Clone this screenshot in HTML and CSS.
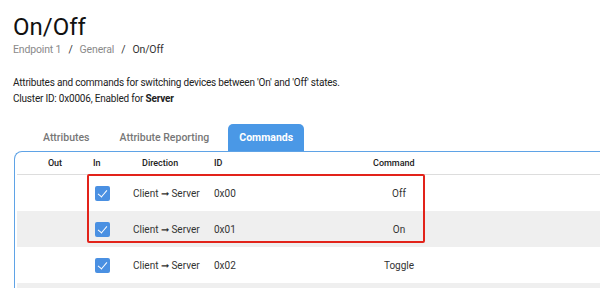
FILE: index.html
```html
<!DOCTYPE html>
<html lang="en">
<head>
  <meta charset="UTF-8">
  <title>On/Off</title>
  <link rel="stylesheet" href="styles.css">
</head>
<body>

  <h1>On/Off</h1>
  <div class="crumbs">
    <span>Endpoint 1</span><span class="sep">/</span><span>General</span><span class="sep">/</span><span class="current">On/Off</span>
  </div>

  <p class="desc">
    Attributes and commands for switching devices between 'On' and 'Off' states.<br>
    Cluster ID: 0x0006, Enabled for <b>Server</b>
  </p>

  <div class="tabs">
    <div class="tab">Attributes</div>
    <div class="tab">Attribute Reporting</div>
    <div class="tab active">Commands</div>
  </div>

  <div class="panel">
    <div class="row head">
      <div class="c-out">Out</div>
      <div class="c-in">In</div>
      <div class="c-dir">Direction</div>
      <div class="c-id">ID</div>
      <div class="c-cmd">Command</div>
    </div>
    <div class="row">
      <div class="c-out"></div>
      <div class="c-in"><span class="check"></span></div>
      <div class="c-dir">Client &#x279E; Server</div>
      <div class="c-id">0x00</div>
      <div class="c-cmd">Off</div>
    </div>
    <div class="row alt">
      <div class="c-out"></div>
      <div class="c-in"><span class="check"></span></div>
      <div class="c-dir">Client &#x279E; Server</div>
      <div class="c-id">0x01</div>
      <div class="c-cmd">On</div>
    </div>
    <div class="row">
      <div class="c-out"></div>
      <div class="c-in"><span class="check"></span></div>
      <div class="c-dir">Client &#x279E; Server</div>
      <div class="c-id">0x02</div>
      <div class="c-cmd">Toggle</div>
    </div>
    <div class="row alt"></div>

    <div class="highlight"></div>
  </div>

</body>
</html>
```

FILE: styles.css
```css
html, body {
  height: 288px;
  overflow: hidden;
}
body {
  margin: 0;
  padding: 0 0 0 13px;
  font-family: Roboto, "Liberation Sans", sans-serif;
  color: #222;
  background: #fff;
}
h1 {
  margin: 0;
  padding-top: 13px;
  font-size: 24px;
  font-weight: 400;
  line-height: 28px;
  color: #111;
}
.crumbs {
  margin-top: 2px;
  font-size: 10.5px;
  line-height: 14px;
  letter-spacing: -0.15px;
  color: #8a8a8a;
}
.crumbs .sep {
  margin: 0 7px;
  color: #333;
}
.crumbs .current {
  color: #333;
}
.desc {
  margin: 18px 0 0;
  font-size: 10px;
  line-height: 16px;
  letter-spacing: -0.2px;
  color: #222;
}
.desc b {
  font-weight: 700;
}
.tabs {
  display: flex;
  margin-top: 17px;
  padding-left: 15px;
  height: 27px;
}
.tab {
  padding: 0 15px;
  font-size: 10.5px;
  font-weight: 500;
  line-height: 27px;
  color: #777;
}
.tab.active {
  margin-left: 4px;
  padding: 0 11px;
  background: #4a98e6;
  color: #fff;
  font-weight: 700;
  border-radius: 5px 5px 0 0;
}
.panel {
  position: relative;
  height: 136px;
  overflow: hidden;
  margin-left: 1px;
  border: 1.5px solid #5fa3e6;
  border-right: none;
  border-bottom: none;
  border-radius: 8px 0 0 0;
  padding-left: 2px;
}
.row {
  display: grid;
  grid-template-columns: 71px 40px 80px 165px 52px 1fr;
  align-items: center;
  height: 36px;
  font-size: 10px;
  color: #333;
}
.row.alt {
  background: #efefef;
}
.row.head {
  height: 22px;
  border-bottom: 1px solid #ddd;
  font-size: 9px;
  font-weight: 500;
  color: #222;
}
.head .c-out { text-align: center; padding-left: 5px; }
.head .c-in { padding-left: 5px; }
.head .c-dir { padding-left: 14px; }
.head .c-id { padding-left: 6px; }
.head .c-cmd { padding-left: 0; text-align: left; }
.c-in { padding-left: 7px; display: flex; }
.c-dir { padding-left: 5px; }
.c-id { padding-left: 6px; }
.c-cmd { text-align: center; }
.check {
  display: inline-block;
  position: relative;
  width: 15px;
  height: 15px;
  background: #4a90e2;
  border-radius: 2px;
}
.check::after {
  content: "";
  position: absolute;
  left: 5px;
  top: 2px;
  width: 4px;
  height: 8px;
  border: solid #fff;
  border-width: 0 1.5px 1.5px 0;
  transform: rotate(40deg);
}
.highlight {
  position: absolute;
  left: 71.5px;
  top: 22px;
  width: 334px;
  height: 65px;
  border: 2px solid #e2231a;
  border-radius: 2px;
}
```
